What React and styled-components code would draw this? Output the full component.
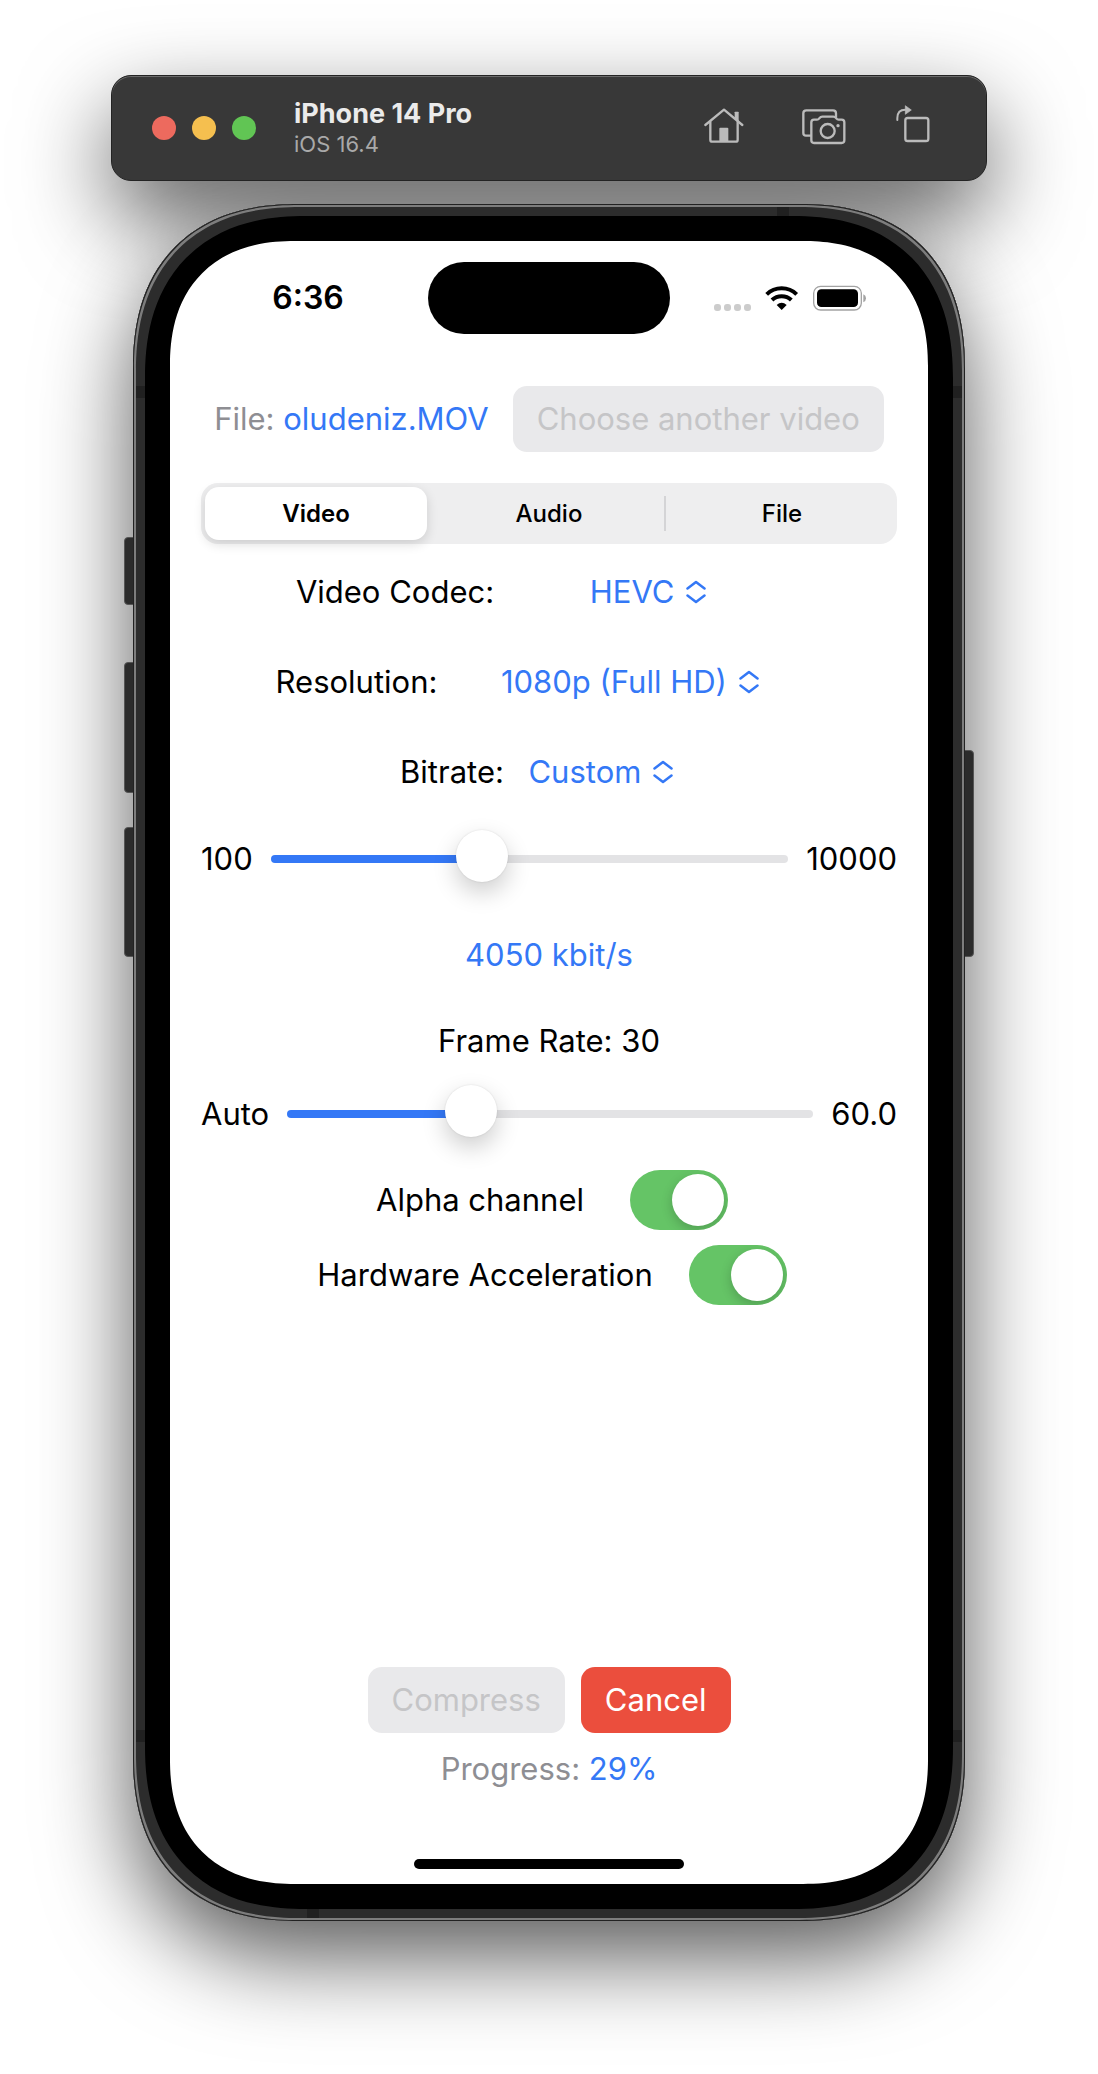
import React, { useState } from "react";
import styled, { createGlobalStyle, css } from "styled-components";

const blue = "#3478f6";

const GlobalStyle = createGlobalStyle`
  *, *::before, *::after { box-sizing: border-box; }
  body { margin: 0; background: #fff; font-family: Inter, Roboto, "Liberation Sans", sans-serif; }
  button, select, input { font: inherit; margin: 0; }
`;

const Stage = styled.main`
  isolation: isolate;
  display: flex;
  flex-direction: column;
  gap: 23px;
  max-width: 1098px;
  margin: 0 auto;
  padding: 75px 111px 153px;
  overflow: hidden;
`;

const dropShadow = css`
  position: relative;
  &::before {
    content: "";
    position: absolute;
    z-index: -1;
    inset: 0;
    border-radius: inherit;
    box-shadow: 0 36px 90px rgba(0, 0, 0, 0.65);
  }
`;

const smoothCorners = (round, smooth) => css`
  border-radius: ${round}px;
  @supports (corner-shape: superellipse(1.22)) {
    border-radius: ${smooth}px;
    corner-shape: superellipse(1.22);
  }
`;

const Toolbar = styled.header`
  ${dropShadow}
  display: flex;
  align-items: center;
  height: 106px;
  padding: 0 55px 0 40px;
  border-radius: 20px;
  background: #383838;
  border: 1px solid #232323;
  box-shadow: inset 0 1px 0 #6a6a6a;
`;

const Lights = styled.div`
  display: flex;
  gap: 16px;
`;

const Light = styled.button`
  width: 24px;
  height: 24px;
  padding: 0;
  border: 0;
  border-radius: 50%;
  background: ${(p) => p.$color};
`;

const DeviceInfo = styled.div`
  flex: 1;
  padding-left: 38px;
`;

const DeviceName = styled.h1`
  margin: 0;
  font-size: 27px;
  line-height: 32px;
  font-weight: 700;
  color: #ebebeb;
`;

const DeviceOs = styled.p`
  margin: 0;
  font-size: 22px;
  line-height: 28px;
  color: #a9a9a9;
`;

const Tools = styled.div`
  display: flex;
  gap: 48px;
`;

const Tool = styled.button`
  display: flex;
  padding: 0;
  border: 0;
  background: none;
  color: #bbb;
`;

const Phone = styled.section`
  ${dropShadow}
  ${smoothCorners(146, 165)}
  margin: 0 22px;
  padding: 37px;
  background: #000;
  box-shadow:
    inset 0 0 0 1px #222,
    inset 0 0 0 3px #7d7d7d,
    inset 0 0 0 12px #2c2c2c;
  &::before {
    corner-shape: inherit;
  }
`;

const Antenna = styled.span`
  position: absolute;
  background: #202020;
  ${(p) => (p.$edge === "left" || p.$edge === "right" ? "width: 9px; height: 12px;" : "width: 12px; height: 9px;")}
  ${(p) => p.$edge}: 3px;
  ${(p) => p.$from}: ${(p) => p.$at}px;
`;

const SideButton = styled.span`
  position: absolute;
  z-index: -1;
  ${(p) => p.$edge}: -9px;
  top: ${(p) => p.$top}px;
  width: 14px;
  height: ${(p) => p.$length}px;
  border-radius: 4px;
  border: 1px solid #555;
  background: #2b2b2b;
`;

const Screen = styled.div`
  ${smoothCorners(108, 125)}
  display: flex;
  flex-direction: column;
  aspect-ratio: 758 / 1643;
  padding: 21px 31px 15px;
  background: #fff;
  color: #000;
  font-size: 31px;
  line-height: 40px;
`;

const StatusBar = styled.div`
  display: grid;
  grid-template-columns: 1fr 242px 1fr;
  align-items: center;
  margin: 0 -31px;
`;

const Clock = styled.time`
  padding-left: 18px;
  text-align: center;
  font-size: 32px;
  font-weight: 600;
`;

const Island = styled.div`
  height: 72px;
  border-radius: 36px;
  background: #000;
`;

const StatusIcons = styled.div`
  display: flex;
  justify-content: center;
  align-items: flex-end;
  gap: 14px;
  padding-right: 17px;
`;

const CellDots = styled.div`
  display: flex;
  gap: 3px;
`;

const CellDot = styled.i`
  width: 7px;
  height: 7px;
  border-radius: 3px;
  background: #ccc;
`;

const FileRow = styled.div`
  display: flex;
  justify-content: center;
  align-items: center;
  gap: 24px;
  margin-top: 52px;
`;

const Muted = styled.span`
  color: #8e8e93;
`;

const Accent = styled.span`
  color: ${blue};
`;

const Action = styled.button`
  height: 66px;
  padding: 0 24px;
  border: 0;
  border-radius: 14px;
  white-space: nowrap;
  background: ${(p) => (p.$danger ? "#eb4e3d" : "#e9e9eb")};
  color: ${(p) => (p.$danger ? "#fff" : "#c5c5c7")};
`;

const Segments = styled.div`
  display: grid;
  grid-template-columns: repeat(3, 1fr);
  gap: 11px;
  height: 61px;
  margin-top: 31px;
  padding: 4px;
  border-radius: 17px;
  background: #eeeeef;
`;

const Segment = styled.button`
  position: relative;
  border: 0;
  border-radius: 14px;
  padding: 0;
  font-size: 24px;
  color: #000;
  font-weight: ${(p) => (p.$active ? 600 : 500)};
  background: ${(p) => (p.$active ? "#fff" : "none")};
  box-shadow: ${(p) => (p.$active ? "0 4px 12px rgba(0, 0, 0, 0.14)" : "none")};
  &:last-child::before {
    content: "";
    position: absolute;
    left: -7px;
    top: 9px;
    width: 2px;
    height: 35px;
    background: #d4d4d6;
  }
`;

const Settings = styled.div`
  display: flex;
  flex-direction: column;
  padding-top: 3px;
`;

const Row = styled.div`
  display: flex;
  justify-content: center;
  align-items: center;
  height: ${(p) => p.$height}px;
`;

const Picker = styled.div`
  display: flex;
  justify-content: center;
  align-items: center;
  gap: 12px;
  width: ${(p) => p.$width}px;
  color: ${blue};
`;

const Select = styled.select`
  appearance: none;
  field-sizing: content;
  padding: 0;
  border: 0;
  background: none;
  color: inherit;
`;

const Range = styled.input`
  --fill: calc(26px + ${(p) => p.$ratio} * (100% - 52px));
  appearance: none;
  flex: 1;
  min-width: 0;
  height: 52px;
  background: none;
  &::-webkit-slider-runnable-track {
    height: 8px;
    border-radius: 4px;
    background: linear-gradient(to right, ${blue} var(--fill), #e3e3e5 var(--fill));
  }
  &::-webkit-slider-thumb {
    appearance: none;
    width: 52px;
    height: 52px;
    margin-top: -25px;
    border-radius: 50%;
    background: #fff;
    box-shadow: 0 0 2px rgba(0, 0, 0, 0.12), 0 10px 24px rgba(0, 0, 0, 0.2);
  }
`;

const RangeRow = styled(Row)`
  gap: 18px;
`;

const Switches = styled.div`
  display: flex;
  flex-direction: column;
  gap: 15px;
  padding-top: 15px;
`;

const SwitchRow = styled.div`
  display: flex;
  justify-content: center;
  align-items: center;
  gap: ${(p) => p.$gap}px;
  padding-left: 6px;
`;

const Switch = styled.input`
  appearance: none;
  display: flex;
  width: 98px;
  height: 60px;
  padding: 4px;
  border-radius: 30px;
  background: #e9e9eb;
  overflow: hidden;
  &::before {
    content: "";
    width: 52px;
    height: 52px;
    border-radius: 50%;
    background: #fff;
    box-shadow: 0 4px 12px rgba(0, 0, 0, 0.2);
  }
  &:checked {
    justify-content: flex-end;
    background: #65c466;
  }
`;

const Footer = styled.footer`
  display: flex;
  flex-direction: column;
  align-items: center;
  margin-top: auto;
`;

const Actions = styled.div`
  display: flex;
  gap: 16px;
  margin-bottom: 16px;
`;

const HomeIndicator = styled.div`
  width: 270px;
  height: 10px;
  margin-top: 70px;
  border-radius: 5px;
  background: #000;
`;

function HomeIcon() {
  return (
    <svg width="58" height="48" viewBox="284 162 174 144" fill="none" stroke="currentColor" strokeWidth="7" strokeLinecap="round" strokeLinejoin="round">
      <path d="M315 225 371 179l55 46" />
      <path d="M330 216v53q0 6 6 6h70q6 0 6-6v-53" />
      <path d="M403 187q0-2 2-2h8q2 0 2 2v29l-12-10z" fill="currentColor" stroke="none" />
      <path d="M357 276v-40q0-3 3-3h21q3 0 3 3v40z" fill="currentColor" stroke="none" />
    </svg>
  );
}

function ScreenshotIcon() {
  return (
    <svg width="46" height="48" viewBox="602 162 138 144" fill="none" stroke="currentColor" strokeWidth="7" strokeLinejoin="round">
      <path d="M632 257h-15q-8 0-8-8v-59q0-9 9-9h80q9 0 9 9v11" />
      <path d="M641 209h9q4 0 7-4 4-5 9-5h33q5 0 9 5 3 4 7 4h9q8 0 8 8v54q0 8-8 8h-83q-8 0-8-8v-54q0-8 8-8z" />
      <circle cx="682" cy="243" r="21" />
      <circle cx="713" cy="227" r="5" fill="currentColor" stroke="none" />
    </svg>
  );
}

function RotateIcon() {
  return (
    <svg width="36" height="48" viewBox="884 162 108 144" fill="none" stroke="currentColor" strokeWidth="7" strokeLinejoin="round">
      <rect x="915" y="204" width="69" height="69" rx="7" />
      <path d="M891 210v-6q0-25 24-25" strokeWidth="6" strokeLinecap="round" />
      <path d="M915 167 933 180 915 193z" fill="currentColor" strokeWidth="2" />
    </svg>
  );
}

function WifiIcon() {
  return (
    <svg width="34" height="26" viewBox="495 702 102 78" fill="none" stroke="#000" strokeWidth="12">
      <path d="M500 730A65 65 0 0 1 590 730" />
      <path d="M516 747A42 42 0 0 1 574 747" />
      <path d="M545 777 530 762Q545 748 560 762z" fill="#000" stroke="none" />
    </svg>
  );
}

function BatteryIcon() {
  return (
    <svg width="54" height="26" viewBox="636 702 162 78">
      <rect x="638" y="706" width="143" height="71" rx="21" fill="none" stroke="#a3a3a3" strokeWidth="4" />
      <rect x="648" y="715" width="123" height="53" rx="13" />
      <path d="M787 730q8 3 8 12t-8 12z" fill="#a3a3a3" />
    </svg>
  );
}

function Chevrons() {
  return (
    <svg width="20" height="24" viewBox="0 0 20 24" fill="none" stroke="currentColor" strokeWidth="2.500" strokeLinecap="round" strokeLinejoin="round" aria-hidden="true">
      <path d="M1.500 8.500 10 2l8.500 6.500" />
      <path d="M1.500 15.500 10 22l8.500-6.500" />
    </svg>
  );
}

function PickerRow({ id, label, options, width }) {
  const [value, setValue] = useState(options[0]);
  return (
    <Row $height={90}>
      <label htmlFor={id}>{label}</label>
      <Picker $width={width}>
        <Select id={id} value={value} onChange={(e) => setValue(e.target.value)}>
          {options.map((o) => (
            <option key={o}>{o}</option>
          ))}
        </Select>
        <Chevrons />
      </Picker>
    </Row>
  );
}

function SliderRow({ label, low, high, min, max, value, onChange, height }) {
  return (
    <RangeRow $height={height}>
      <span>{low}</span>
      <Range
        type="range"
        aria-label={label}
        min={min}
        max={max}
        value={value}
        $ratio={(value - min) / (max - min)}
        onChange={(e) => onChange(Number(e.target.value))}
      />
      <span>{high}</span>
    </RangeRow>
  );
}

function SwitchField({ id, label, gap }) {
  return (
    <SwitchRow $gap={gap}>
      <label htmlFor={id}>{label}</label>
      <Switch id={id} type="checkbox" role="switch" defaultChecked />
    </SwitchRow>
  );
}

export default function App() {
  const [tab, setTab] = useState("Video");
  const [bitrate, setBitrate] = useState(4050);
  const [rate, setRate] = useState(30);

  return (
    <>
      <GlobalStyle />
      <Stage>
        <Toolbar>
          <Lights>
            <Light $color="#ed6a5e" aria-label="Close" />
            <Light $color="#f5bf4f" aria-label="Minimize" />
            <Light $color="#61c554" aria-label="Zoom" />
          </Lights>
          <DeviceInfo>
            <DeviceName>iPhone 14 Pro</DeviceName>
            <DeviceOs>iOS 16.4</DeviceOs>
          </DeviceInfo>
          <Tools>
            <Tool aria-label="Home"><HomeIcon /></Tool>
            <Tool aria-label="Screenshot"><ScreenshotIcon /></Tool>
            <Tool aria-label="Rotate"><RotateIcon /></Tool>
          </Tools>
        </Toolbar>

        <Phone>
          <SideButton $edge="left" $top={333} $length={68} />
          <SideButton $edge="left" $top={458} $length={131} />
          <SideButton $edge="left" $top={623} $length={130} />
          <SideButton $edge="right" $top={546} $length={207} />
          <Antenna $edge="left" $from="top" $at={182} />
          <Antenna $edge="right" $from="top" $at={182} />
          <Antenna $edge="left" $from="bottom" $at={179} />
          <Antenna $edge="right" $from="bottom" $at={179} />
          <Antenna $edge="top" $from="right" $at={176} />
          <Antenna $edge="bottom" $from="left" $at={174} />

          <Screen>
            <StatusBar>
              <Clock>6:36</Clock>
              <Island />
              <StatusIcons>
                <CellDots>
                  <CellDot /><CellDot /><CellDot /><CellDot />
                </CellDots>
                <WifiIcon />
                <BatteryIcon />
              </StatusIcons>
            </StatusBar>

            <FileRow>
              <Muted>File: <Accent>oludeniz.MOV</Accent></Muted>
              <Action disabled>Choose another video</Action>
            </FileRow>

            <Segments role="tablist">
              {["Video", "Audio", "File"].map((name) => (
                <Segment key={name} role="tab" aria-selected={tab === name} $active={tab === name} onClick={() => setTab(name)}>
                  {name}
                </Segment>
              ))}
            </Segments>

            <Settings>
              <PickerRow id="codec" label="Video Codec:" options={["HEVC", "H.264"]} width={308} />
              <PickerRow id="resolution" label="Resolution:" options={["1080p (Full HD)", "720p (HD)"]} width={385} />
              <PickerRow id="bitrate" label="Bitrate:" options={["Custom", "Auto"]} width={194} />
              <SliderRow label="Bitrate in kbit/s" low="100" high="10000" min={100} max={10000} value={bitrate} onChange={setBitrate} height={84} />
              <Row $height={108}><Accent>{bitrate} kbit/s</Accent></Row>
              <Row $height={64}>Frame Rate: {rate}</Row>
              <SliderRow label="Frame rate" low="Auto" high="60.0" min={15} max={60} value={rate} onChange={setRate} height={82} />
              <Switches>
                <SwitchField id="alpha" label="Alpha channel" gap={46} />
                <SwitchField id="hardware" label="Hardware Acceleration" gap={36} />
              </Switches>
            </Settings>

            <Footer>
              <Actions>
                <Action disabled>Compress</Action>
                <Action $danger>Cancel</Action>
              </Actions>
              <Muted>Progress: <Accent>29%</Accent></Muted>
              <HomeIndicator />
            </Footer>
          </Screen>
        </Phone>
      </Stage>
    </>
  );
}
